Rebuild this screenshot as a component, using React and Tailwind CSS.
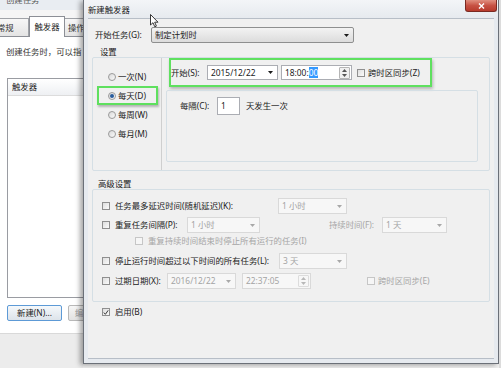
import React from "react";

const Arrow = ({ disabled }) => (
  <svg width="5" height="3" viewBox="0 0 5 3" className="shrink-0">
    <path d="M0 0h5L2.5 3z" fill={disabled ? "#a8a8a8" : "#1a1a1a"} />
  </svg>
);

const CheckBox = ({ checked, disabled }) => (
  <span
    className={`w-[8px] h-[8px] shrink-0 border flex items-center justify-center ${
      disabled ? "border-[#c6c6c6] bg-[#f6f6f6]" : "border-[#8f8f8f] bg-gradient-to-br from-[#dedede] to-[#fbfbfb]"
    }`}>
    {checked && (
      <svg width="7" height="7" viewBox="0 0 7 7">
        <path d="M1 3.6 L2.8 5.6 L6 1" stroke="#2b2b2b" strokeWidth="1.1" fill="none" />
      </svg>
    )}
  </span>
);

const Radio = ({ checked }) => (
  <span className="w-[8px] h-[8px] shrink-0 rounded-full border border-[#9a9a9a] bg-gradient-to-br from-[#d9d9d9] to-[#fafafa] flex items-center justify-center">
    {checked && <span className="w-[4px] h-[4px] rounded-full bg-[#2a5d9c]" />}
  </span>
);

const Combo = ({ text, className, disabled }) => (
  <div
    className={`h-[16px] shrink-0 flex items-center justify-between pl-[3px] pr-[4px] border ${
      disabled ? "border-[#d9d9d9] bg-[#f7f7f7] text-[#a4a4a4]" : "border-[#8e8f8f] rounded-[2px] bg-gradient-to-b from-[#f3f3f3] to-[#dcdcdc] text-[#222]"
    } ${className}`}>
    <span>{text}</span>
    <Arrow disabled={disabled} />
  </div>
);

const Spinner = ({ disabled }) => (
  <div className={`w-[11px] h-[12px] mr-[1px] flex flex-col items-center justify-center gap-[2px] border rounded-[1px] ${disabled ? "border-[#dcdcdc]" : "border-[#b5b5b5] bg-[#f0f0f0]"}`}>
    <svg width="5" height="3" viewBox="0 0 5 3">
      <path d="M0 3h5L2.5 0z" fill={disabled ? "#b8b8b8" : "#555"} />
    </svg>
    <svg width="5" height="3" viewBox="0 0 5 3">
      <path d="M0 0h5L2.5 3z" fill={disabled ? "#b8b8b8" : "#555"} />
    </svg>
  </div>
);

const Label = ({ children, className = "", disabled }) => (
  <span className={`shrink-0 whitespace-nowrap ${disabled ? "text-[#a6a6a6]" : "text-[#222]"} ${className}`}>{children}</span>
);

export default function App() {
  return (
    <div className="w-[501px] h-[368px] relative overflow-hidden flex bg-[#f0f0f0] font-['Noto_Sans','Noto_Sans_CJK_SC',sans-serif] text-[8.4px] leading-[10px]">
      {/* Background window (创建任务) */}
      <div className="w-[83px] shrink-0 h-full flex flex-col overflow-hidden bg-white">
        <div className="h-[10px] overflow-hidden bg-[#e9edf2] pl-[6px]">
          <div className="-mt-[5px] text-[#555]">创建任务</div>
        </div>
        <div className="h-[6px] bg-[#f5f5f5]" />
        <div className="h-[21px] flex items-end border-b border-[#8c8f96] bg-[#f5f5f5]">
          <div className="w-[29px] h-[18px] shrink-0 border-t border-r border-[#a0a3a8] bg-gradient-to-b from-[#f7f7f7] to-[#e4e4e4] flex items-center overflow-hidden">
            <span className="-ml-[3px] text-[#333]">常规</span>
          </div>
          <div className="w-[36px] h-[21px] shrink-0 -mb-px border-l border-r border-t border-[#8c8f96] bg-white flex items-center justify-center text-[#222]">触发器</div>
          <div className="w-[30px] h-[18px] shrink-0 border-t border-[#a0a3a8] bg-gradient-to-b from-[#f7f7f7] to-[#e4e4e4] flex items-center pl-[3px] text-[#333]">操作</div>
        </div>
        <div className="h-[296px] bg-white flex flex-col">
          <div className="mt-[10px] pl-[6px] whitespace-nowrap text-[#333]">创建任务时，可以指</div>
          <div className="mt-[21px] ml-[7px] h-[220px] w-[90px] border border-r-0 border-[#9a9ca2]">
            <div className="h-[17px] bg-gradient-to-b from-white to-[#eef0f3] border-b border-[#dcdcdc] flex items-center pl-[4px] text-[#222]">触发器</div>
          </div>
          <div className="mt-[7px] pl-[7px] flex">
            <div className="w-[55px] h-[16px] shrink-0 rounded-[2px] border border-[#5d9ad6] bg-gradient-to-b from-[#f5f8fb] to-[#dde3ea] flex items-center justify-center text-[#222]">新建(N)...</div>
            <div className="ml-[6px] w-[40px] h-[16px] shrink-0 rounded-[2px] border border-[#b8b8b8] bg-gradient-to-b from-[#f6f6f6] to-[#e2e2e2] flex items-center pl-[6px] text-[#999]">编辑</div>
          </div>
        </div>
        <div className="flex-1 bg-[#ececec] border-t border-[#d9d9d9]" />
      </div>

      {/* 新建触发器 dialog */}
      <div className="w-[416px] h-[364px] shrink-0 flex flex-col border-l border-r border-b border-[#6b7078] bg-[#e6eaef] shadow-[-3px_1px_5px_rgba(0,0,0,0.35)]">
        <div className="h-[18px] shrink-0 flex items-start justify-between bg-gradient-to-b from-[#f3f5f8] to-[#e6eaef]">
          <span className="pl-[4px] pt-[5px] text-[#222]">新建触发器</span>
          <div className="w-[32px] h-[12px] mr-[1px] rounded-b-[3px] border border-t-0 border-[#7a2a22] bg-gradient-to-b from-[#e08f80] via-[#c75244] to-[#b83a2c] flex items-center justify-center">
            <svg width="7" height="6" viewBox="0 0 7 6">
              <path d="M1 0.5 L6 5.5 M6 0.5 L1 5.5" stroke="#fff" strokeWidth="1.4" />
            </svg>
          </div>
        </div>

        <div className="flex-1 mx-[4px] mb-[4px] bg-[#f0f0f0] border border-[#b7bec7] border-l-0 border-r-0 flex flex-col">
          {/* 开始任务 */}
          <div className="mt-[8px] h-[16px] flex items-center pl-[7px]">
            <Label className="w-[56px]">开始任务(G):</Label>
            <Combo text="制定计划时" className="w-[203px]" />
          </div>

          {/* 设置 group */}
          <div className="mt-[4px] ml-[12px] h-[10px] text-[#222]">设置</div>
          <div className="ml-[4px] w-[398px] h-[114px] border border-[#d5dfe5] rounded-[2px] flex">
            <div className="w-[69px] shrink-0 border-r border-[#cfcfcf] pt-[9px] flex flex-col">
              <div className="h-[19px] flex items-center pl-[15px] gap-[2px]">
                <Radio />
                <Label>一次(N)</Label>
              </div>
              <div className="h-[19px] flex items-center pl-[15px] gap-[2px] relative">
                <Radio checked />
                <Label>每天(D)</Label>
                <div className="absolute left-[4px] top-0 w-[61px] h-[19px] border-2 border-[#5fe05f] shadow-[1px_2px_2px_rgba(0,0,0,0.25)]" />
              </div>
              <div className="h-[19px] flex items-center pl-[15px] gap-[2px]">
                <Radio />
                <Label>每周(W)</Label>
              </div>
              <div className="h-[19px] flex items-center pl-[15px] gap-[2px]">
                <Radio />
                <Label>每月(M)</Label>
              </div>
            </div>
            <div className="flex-1 pl-[4px] flex flex-col">
              <div className="ml-[3px] w-[263px] h-[29px] border-2 border-[#5fe05f] shadow-[1px_2px_3px_rgba(0,0,0,0.25)] flex items-center">
                <Label className="w-[36px]">开始(S):</Label>
                <div className="w-[71px] h-[15px] shrink-0 bg-white border border-[#abadb3] flex items-center justify-between pl-[3px] pr-[4px] text-[#222]">
                  <span>2015/12/22</span>
                  <Arrow />
                </div>
                <div className="ml-[3px] w-[71px] h-[15px] shrink-0 bg-white border border-[#abadb3] flex items-center justify-between pl-[3px] text-[#222]">
                  <span>
                    18:00:<span className="bg-[#3399ff] text-white">00</span>
                  </span>
                  <Spinner />
                </div>
                <span className="ml-[5px]">
                  <CheckBox />
                </span>
                <Label className="ml-[3px]">跨时区同步(Z)</Label>
              </div>
              <div className="mt-[3px] w-[312px] h-[72px] border border-[#d5dfe5] rounded-[2px] pl-[13px] pt-[6px]">
                <div className="h-[18px] flex items-center">
                  <Label className="w-[37px]">每隔(C):</Label>
                  <div className="w-[23px] h-[18px] shrink-0 bg-white border border-[#abadb3] flex items-center pl-[3px] text-[#222]">1</div>
                  <Label className="ml-[6px]">天发生一次</Label>
                </div>
              </div>
            </div>
          </div>

          {/* 高级设置 group */}
          <div className="mt-[8px] ml-[10px] h-[10px] text-[#222]">高级设置</div>
          <div className="ml-[4px] w-[398px] h-[113px] border border-[#d5dfe5] rounded-[2px] flex flex-col">
            <div className="mt-[8px] h-[16px] flex items-center pl-[9px]">
              <CheckBox />
              <Label className="ml-[5px] w-[163px]">任务最多延迟时间(随机延迟)(K):</Label>
              <Combo text="1 小时" className="w-[69px]" disabled />
            </div>
            <div className="mt-[3px] h-[16px] flex items-center pl-[9px]">
              <CheckBox />
              <Label className="ml-[5px] w-[72px]">重复任务间隔(P):</Label>
              <Combo text="1 小时" className="w-[73px]" disabled />
              <Label className="ml-[69px] w-[53px]" disabled>持续时间(F):</Label>
              <Combo text="1 天" className="w-[65px]" disabled />
            </div>
            <div className="mt-[2px] h-[12px] flex items-center pl-[42px]">
              <CheckBox disabled />
              <Label className="ml-[5px]" disabled>重复持续时间结束时停止所有运行的任务(I)</Label>
            </div>
            <div className="mt-[6px] h-[16px] flex items-center pl-[9px]">
              <CheckBox />
              <Label className="ml-[5px] w-[164px]">停止运行时间超过以下时间的所有任务(L):</Label>
              <Combo text="3 天" className="w-[68px]" disabled />
            </div>
            <div className="mt-[4px] h-[16px] flex items-center pl-[9px]">
              <CheckBox />
              <Label className="ml-[5px] w-[52px]">过期日期(X):</Label>
              <Combo text="2016/12/22" className="w-[69px]" disabled />
              <div className="ml-[6px] w-[69px] h-[16px] shrink-0 border border-[#d9d9d9] bg-[#f7f7f7] flex items-center justify-between pl-[3px] text-[#a4a4a4]">
                <span>22:37:05</span>
                <Spinner disabled />
              </div>
              <span className="ml-[56px]">
                <CheckBox disabled />
              </span>
              <Label className="ml-[3px]" disabled>跨时区同步(E)</Label>
            </div>
          </div>

          <div className="mt-[5px] h-[10px] flex items-center pl-[14px]">
            <CheckBox checked />
            <Label className="ml-[5px]">启用(B)</Label>
          </div>
        </div>
      </div>

      <div className="flex-1 bg-[#dcdcdc]" />

      {/* mouse pointer */}
      <svg className="absolute left-[150px] top-[14px]" width="9" height="14" viewBox="0 0 9 14">
        <path d="M0.5 0.5 L0.5 11 L3 8.7 L4.8 12.8 L6.4 12.1 L4.7 8.2 L8 8.2 Z" fill="#fff" stroke="#222" strokeWidth="0.9" strokeLinejoin="round" />
      </svg>
    </div>
  );
}
